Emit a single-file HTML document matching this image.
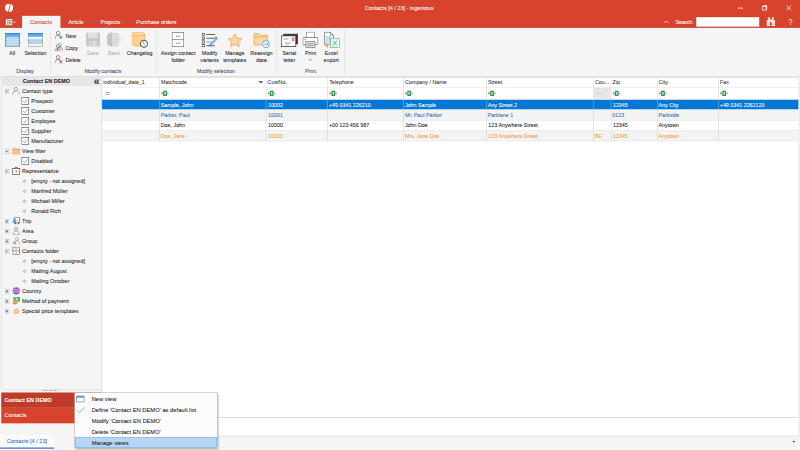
<!DOCTYPE html>
<html lang="en"><head><meta charset="utf-8"><title>Contacts [4 / 23] - ingenious</title>
<style>
html,body{margin:0;padding:0;width:800px;height:450px;overflow:hidden;background:#f5f5f5}
#app{-webkit-text-stroke:0.15px;position:absolute;left:0;top:0;width:1920px;height:1080px;transform:scale(0.4166667);transform-origin:0 0;font-family:"Liberation Sans",sans-serif;font-size:12.8px;color:#262626;background:#f5f5f5;overflow:hidden}
#app div,#app span,#app svg{position:absolute;white-space:nowrap}
.c{text-align:center;transform:translateX(-50%)}
.t{line-height:16px;height:16px}
.w{color:#fff}
.sep{width:1px;background:#d4d4d4;top:72px;height:104px}
.gl{color:#46506a}
.dis{color:#b0b0b0}
.hl{background:#dadada;height:1px}
.vl{background:#c6c6c6;width:1px}
.row{left:245px;width:1671px;height:25px}
.cell{line-height:24px;height:24px;top:0.5px}
.ti{line-height:16px;height:16px;left:53px;font-size:13.1px}
.ck{left:52px;width:15px;height:15px;border:1px solid #6a6a6a;background:#fff;box-sizing:border-box}
.cl{line-height:16px;height:16px;left:75px;font-size:13.1px}
.bu{left:57px;width:6px;height:6px;border:1.6px solid #4c4c4c;border-radius:50%;box-sizing:border-box;background:#fff}
.ex{left:12px;width:9.6px;height:9.6px;border:1px solid #9a9a9a;box-sizing:border-box;background:#fff}
.mi{line-height:16px;height:16px;left:220px;color:#1a1a1a;font-size:13.9px}
</style></head>
<body><div id="app">
<div style="left:0;top:0;width:1920px;height:66.5px;background:#d8432e"></div>
<svg style="left:11.8px;top:9px" width="19.6" height="19.6" viewBox="0 0 22 22"><circle cx="11" cy="11" r="11" fill="#fff"/><path d="M13.2 0 L15.6 0 L10.6 22 L8.2 22 Z" fill="#d8432e"/></svg>
<div class="t w c" style="left:958px;top:11px;font-size:13.2px">Contacts [4 / 23] - ingenious</div>
<svg style="left:1770px;top:12px" width="14" height="14" viewBox="0 0 14 14"><path d="M1 7.5H13" stroke="#fff" stroke-width="2"/></svg>
<svg style="left:1828px;top:12px" width="14" height="14" viewBox="0 0 14 14" fill="none" stroke="#fff" stroke-width="1.9"><rect x="1.5" y="3.5" width="9" height="9"/><path d="M3.5 3.5V1.5H12.5V10.5H10.5"/></svg>
<svg style="left:1886px;top:12px" width="14" height="14" viewBox="0 0 14 14" stroke="#fff" stroke-width="1.9"><path d="M1 1L13 13M13 1L1 13"/></svg>
<svg style="left:13px;top:45px" width="26" height="16" viewBox="0 0 26 16"><rect x="1" y="0.6" width="15.4" height="15.4" fill="#f2f2f2"/><path d="M5.6 1V15.6" stroke="#666" stroke-width="1.4"/><path d="M7.5 4.6H14.5M7.5 8.3H14.5M7.5 12H14.5" stroke="#555" stroke-width="1.7"/><path d="M19 7H25L22 10Z" fill="#fff"/></svg>
<div style="left:53px;top:38px;width:92px;height:34px;background:#f5f5f5"></div>
<div class="t c" style="left:98.5px;top:45px;color:#d8432e;font-size:13.6px">Contacts</div>
<div class="t w c" style="left:182.5px;top:45px;font-size:13.2px">Article</div>
<div class="t w c" style="left:265px;top:45px;font-size:13.2px">Projects</div>
<div class="t w c" style="left:375.5px;top:45px;font-size:13.2px">Purchase orders</div>
<svg style="left:1592px;top:47px" width="14" height="10" viewBox="0 0 14 10"><path d="M1.5 8.5L7 3L12.5 8.5" fill="none" stroke="#fff" stroke-width="1.8"/></svg>
<div class="t w" style="left:1621px;top:45.5px;font-size:12.8px">Search:</div>
<div style="left:1671px;top:41px;width:150.5px;height:23px;background:#fff;border:1px solid #c9c9c9;box-sizing:border-box"></div>
<svg style="left:1839px;top:41px" width="22" height="22" viewBox="0 0 22 22" fill="#fff"><rect x="4" y="0.5" width="4.6" height="8"/><rect x="13.4" y="0.5" width="4.6" height="8"/><rect x="8.6" y="6" width="4.8" height="5"/><path d="M2.5 7.5H9.2V21.5H0.8V10Z"/><path d="M19.5 7.5H12.8V21.5H21.2V10Z"/><path d="M0.8 14.4H9.2M12.8 14.4H21.2M0.8 18H9.2M12.8 18H21.2" stroke="#d8432e" stroke-width="1"/><path d="M6.3 0.5V8M15.7 0.5V8" stroke="#d8432e" stroke-width="0.9"/></svg>
<div class="t w c" style="left:1896.5px;top:44.5px;font-size:20px;-webkit-text-stroke:0;will-change:transform">?</div>
<div style="left:0;top:183px;width:1920px;height:2px;background:#dcdcdc"></div>
<div class="sep" style="left:121px"></div>
<div class="sep" style="left:375px"></div>
<div class="sep" style="left:663px"></div>
<div class="sep" style="left:826px"></div>
<div class="t c " style="left:29.5px;top:121px">All</div>
<div class="t c " style="left:85px;top:121px">Selection</div>
<div class="t c dis" style="left:223px;top:121px">Save</div>
<div class="t c dis" style="left:273.5px;top:121px">Back</div>
<div class="t c " style="left:335px;top:121px">Changelog</div>
<div class="t c " style="left:427.5px;top:121px">Assign contact</div>
<div class="t c " style="left:427.5px;top:136px">folder</div>
<div class="t c " style="left:503px;top:121px">Modify</div>
<div class="t c " style="left:503px;top:136px">variants</div>
<div class="t c " style="left:563.5px;top:121px">Manage</div>
<div class="t c " style="left:563.5px;top:136px">templates</div>
<div class="t c " style="left:627.5px;top:121px">Reassign</div>
<div class="t c " style="left:627.5px;top:136px">data</div>
<div class="t c " style="left:694.5px;top:121px">Serial</div>
<div class="t c " style="left:694.5px;top:136px">letter</div>
<div class="t c " style="left:745px;top:121px">Print</div>
<div class="t c " style="left:795px;top:121px">Excel</div>
<div class="t c " style="left:795px;top:136px">export</div>
<div class="t" style="left:157px;top:78px">New</div>
<div class="t" style="left:157px;top:107px">Copy</div>
<div class="t" style="left:157px;top:136px">Delete</div>
<div class="t c gl" style="left:60px;top:163px">Display</div>
<div class="t c gl" style="left:247px;top:163px">Modify contacts</div>
<div class="t c gl" style="left:518px;top:163px">Modify selection</div>
<div class="t c gl" style="left:745px;top:163px">Print</div>
<svg style="left:740px;top:140px" width="10" height="7" viewBox="0 0 10 7"><path d="M1 1L5 5L9 1" fill="none" stroke="#555" stroke-width="1.3"/></svg>
<svg style="left:12px;top:79px" width="36" height="33" viewBox="0 0 36 33"><rect x="0.8" y="0.8" width="34.4" height="31.4" fill="#a9d3f3" stroke="#5f5f5f" stroke-width="1.6"/><rect x="0" y="0" width="36" height="9" fill="#5aa9e6"/><rect x="0" y="0" width="36" height="2.6" fill="#3583d0"/><path d="M1.6 15H34.4M1.6 21H34.4M1.6 26.5H34.4M9.5 9V32M18 9V32M26.5 9V32" stroke="#e4f1fb" stroke-width="1.1"/></svg>
<svg style="left:67px;top:79px" width="36" height="33" viewBox="0 0 36 33"><rect x="0.8" y="0.8" width="34.4" height="31.4" fill="#a9d3f3" stroke="#8f8f8f" stroke-width="1.6"/><rect x="1.6" y="9" width="32.8" height="6" fill="#fff"/><rect x="1.6" y="26.5" width="32.8" height="5" fill="#fff"/><rect x="0" y="0" width="36" height="9" fill="#5aa9e6"/><rect x="0" y="0" width="36" height="2.6" fill="#3583d0"/><path d="M1.6 15H34.4M1.6 21H34.4M1.6 26.5H34.4M9.5 9V32M18 9V32M26.5 9V32" stroke="#d0d0d0" stroke-width="1.1"/></svg>
<svg style="left:131px;top:74px" width="21" height="21" viewBox="0 0 21 21"><circle cx="8.5" cy="5.5" r="4.2" fill="#fff" stroke="#555" stroke-width="1.5"/><path d="M1 19C1 13.5 4 10.8 8.5 10.8C12 10.8 14.5 12.5 15.5 15" fill="none" stroke="#555" stroke-width="1.5"/><path d="M15 11.5V20M10.8 15.8H19.3" stroke="#35b05a" stroke-width="2.2"/></svg>
<svg style="left:131px;top:103px" width="21" height="21" viewBox="0 0 21 21"><circle cx="12" cy="5" r="3.8" fill="#fff" stroke="#555" stroke-width="1.4"/><path d="M6 19C6 13.5 8.5 10 12 10C16 10 19 13 19.5 18" fill="none" stroke="#555" stroke-width="1.4"/><circle cx="7.5" cy="7.5" r="3.5" fill="#fff" stroke="#555" stroke-width="1.4"/><path d="M1 20C1 15 3.5 12.3 7.5 12.3C11.5 12.3 13.5 15 14 20" fill="none" stroke="#555" stroke-width="1.4"/><rect x="6.2" y="14.5" width="2.8" height="5.5" fill="#e23c3c"/><path d="M13 10L15 13" stroke="#e23c3c" stroke-width="1.2"/></svg>
<svg style="left:131px;top:132px" width="21" height="21" viewBox="0 0 21 21"><circle cx="8.5" cy="5.5" r="4.2" fill="#fff" stroke="#555" stroke-width="1.5"/><path d="M1 19C1 13.5 4 10.8 8.5 10.8C12 10.8 14.5 12.5 15.5 15" fill="none" stroke="#555" stroke-width="1.5"/><path d="M11 12.5L19 20.5M19 12.5L11 20.5" stroke="#e23c3c" stroke-width="2.1"/></svg>
<svg style="left:206px;top:78px" width="34" height="34" viewBox="0 0 34 34"><path d="M0 0H34V34H4L0 30Z" fill="#c9c9c9"/><rect x="6" y="0" width="22" height="13" fill="#e2e2e2"/><rect x="8" y="21" width="18" height="13" fill="#dedede"/><rect x="11" y="24" width="5" height="7" fill="#c4c4c4"/></svg>
<svg style="left:256px;top:77px" width="36" height="36" viewBox="0 0 36 36"><rect x="12" y="3" width="16" height="30" rx="1.5" fill="#dedede" stroke="#cdcdcd" stroke-width="1.2"/><path d="M1 6L13 0V36L1 30Z" fill="#c4c4c4"/><path d="M17 18H34M29 13L34.5 18L29 23" fill="none" stroke="#d0d0d0" stroke-width="1.6"/></svg>
<svg style="left:316px;top:76px" width="40" height="40" viewBox="0 0 40 40"><path d="M1 5.5V29.5C1 32.8 7.5 35 16 35C24.5 35 31 32.8 31 29.5V5.5Z" fill="#fbd38d" stroke="#f5a34c" stroke-width="1.5"/><ellipse cx="16" cy="5.5" rx="15" ry="4.5" fill="#fcdca4" stroke="#f5a34c" stroke-width="1.5"/><circle cx="29.5" cy="29" r="8.6" fill="#fff" stroke="#2e2e2e" stroke-width="2"/><path d="M29 23.5V29.5L33 32.5" fill="none" stroke="#3b8fe0" stroke-width="1.8"/></svg>
<svg style="left:412px;top:77px" width="30" height="36" viewBox="0 0 30 36"><rect x="1" y="1" width="28" height="34" fill="#fff" stroke="#737373" stroke-width="1.7"/><path d="M1 18H29" stroke="#737373" stroke-width="1.7"/><path d="M11 7V10.5H19V7M11 24V27.5H19V24" fill="none" stroke="#777" stroke-width="1.3"/></svg>
<svg style="left:484px;top:78px" width="40" height="36" viewBox="0 0 40 36"><rect x="1" y="2" width="5.5" height="5.5" fill="#fff" stroke="#333" stroke-width="1.6"/><path d="M11 4.8H32" stroke="#333" stroke-width="1.8"/><rect x="1" y="11" width="5.5" height="5.5" fill="#fff" stroke="#333" stroke-width="1.6"/><path d="M11 13.8H32" stroke="#333" stroke-width="1.8"/><rect x="1" y="20" width="5.5" height="5.5" fill="#fff" stroke="#333" stroke-width="1.6"/><path d="M11 22.8H26" stroke="#888" stroke-width="1.8"/><rect x="1" y="29" width="5.5" height="5.5" fill="#fff" stroke="#333" stroke-width="1.6"/><path d="M11 31.8H32" stroke="#333" stroke-width="1.8"/><path d="M17 33.5L19.5 27.5L33.5 13.5L37 17L23 31Z" fill="#6db3ea"/><path d="M17 33.5L19.5 27.5L23 31Z" fill="#3a7fc8"/><path d="M31.5 11.5L34 9L39 14L36.5 16.5Z" fill="#4a9be4"/></svg>
<svg style="left:546px;top:80px" width="36" height="33" viewBox="0 0 36 33"><path d="M18 1L22.8 11.8L34.8 13L25.8 21L28.4 32L18 26.2L7.6 32L10.2 21L1.2 13L13.2 11.8Z" fill="#fcd6a3" stroke="#f1923a" stroke-width="1.5" stroke-linejoin="round"/></svg>
<svg style="left:608px;top:78px" width="40" height="40" viewBox="0 0 40 40"><path d="M1.5 3H13L16 6.5H33.5V30H1.5Z" fill="#fbd8a8" stroke="#f2994a" stroke-width="1.8"/><path d="M1.5 10.5H33.5" stroke="#f2994a" stroke-width="1.4"/><circle cx="30.5" cy="28" r="8.4" fill="#fff" stroke="#3b93e3" stroke-width="1.8"/><path d="M25.5 28H35M31.5 24.2L35.3 28L31.5 31.8" fill="none" stroke="#3b93e3" stroke-width="1.7"/></svg>
<svg style="left:674px;top:80px" width="42" height="33" viewBox="0 0 42 33"><rect x="6" y="1" width="35" height="25" fill="#3a3a3a"/><rect x="1" y="6" width="35" height="26" fill="#fff" stroke="#2b2b2b" stroke-width="1.8"/><rect x="26.5" y="10" width="6" height="8" fill="#e24a4a"/><rect x="28.5" y="12" width="2" height="4" fill="#fff"/><path d="M6 12H20M6 15H17M10 21.5H24M10 24.5H24M10 27.5H20" stroke="#9a9a9a" stroke-width="1.2"/></svg>
<svg style="left:726px;top:76px" width="38" height="39" viewBox="0 0 38 39"><rect x="9" y="1" width="20" height="14" fill="#fff" stroke="#777" stroke-width="1.5"/><rect x="1" y="14" width="36" height="17" rx="2" fill="#fff" stroke="#666" stroke-width="1.7"/><rect x="8" y="24" width="22" height="14" fill="#e4e4e4" stroke="#666" stroke-width="1.5"/><path d="M11 29H27M11 33H27" stroke="#8a8a8a" stroke-width="1.8"/><circle cx="6.5" cy="19" r="1.6" fill="#2f7fe0"/></svg>
<svg style="left:776px;top:76px" width="40" height="40" viewBox="0 0 40 40"><path d="M3 1.5H17L24 8.5V30H3Z" fill="#fff" stroke="#555" stroke-width="1.5"/><path d="M17 1.5V8.5H24" fill="none" stroke="#555" stroke-width="1.3"/><rect x="6" y="10" width="5" height="17" fill="#bcdcf5"/><rect x="12.5" y="10" width="5" height="17" fill="#9fcbf0"/><rect x="17" y="17" width="21.5" height="21" fill="#eef9f1" stroke="#62bf82" stroke-width="1.7"/><path d="M22.5 22L33 33.5M33 22L22.5 33.5" stroke="#45ad68" stroke-width="1.9"/><path d="M3 26C3 33 6 35 11 35M8 31.5L11.5 35L8 38.5" fill="none" stroke="#e55a5a" stroke-width="1.7"/></svg>
<div style="left:244px;top:184.5px;width:1673.5px;height:862px;background:#fff;border:1.5px solid #c4c4c4;box-sizing:border-box"></div>
<div class="t" style="left:248px;top:190px;color:#383840">individual_date_1</div>
<div class="t" style="left:386.3px;top:190px;color:#383840">Matchcode</div>
<div class="t" style="left:642.3px;top:190px;color:#383840">CustNo.</div>
<div class="t" style="left:790px;top:190px;color:#383840">Telephone</div>
<div class="t" style="left:972.3px;top:190px;color:#383840">Company / Name</div>
<div class="t" style="left:1171px;top:190px;color:#383840">Street</div>
<div class="t" style="left:1428px;top:190px;color:#383840">Cou...</div>
<div class="t" style="left:1470px;top:190px;color:#383840">Zip</div>
<div class="t" style="left:1581px;top:190px;color:#383840">City</div>
<div class="t" style="left:1728px;top:190px;color:#383840">Fax</div>
<svg style="left:620px;top:194px" width="12" height="8" viewBox="0 0 12 8"><path d="M0 0.5H12L6 7Z" fill="#707070"/></svg>
<div class="row" style="top:239.1px;background:#0078d7;color:#fff;height:24.2px">
<div class="cell" style="left:140.8px">Sample, John</div>
<div class="cell" style="left:398.29999999999995px">10002</div>
<div class="cell" style="left:544.5px">+49 0341 226210</div>
<div class="cell" style="left:726.8px">John Sample</div>
<div class="cell" style="left:925.5px">Any Street 2</div>
<div class="cell" style="left:1226px">12345</div>
<div class="cell" style="left:1335.5px">Any City</div>
<div class="cell" style="left:1482.5px">+49 0341 2262120</div>
</div>
<div class="row" style="top:263.3px;background:#f3f3f3;color:#2e75b6">
<div class="cell" style="left:140.8px">Parker, Paul</div>
<div class="cell" style="left:398.29999999999995px">10001</div>
<div class="cell" style="left:726.8px">Mr. Paul Parker</div>
<div class="cell" style="left:925.5px">Parklane 1</div>
<div class="cell" style="left:1224.5px">0123</div>
<div class="cell" style="left:1335.5px">Parkside</div>
</div>
<div class="row" style="top:288.3px;background:#fff;color:#222">
<div class="cell" style="left:140.8px">Doe, John</div>
<div class="cell" style="left:398.29999999999995px">10000</div>
<div class="cell" style="left:544.5px">+00 123 456 987</div>
<div class="cell" style="left:726.8px">John Doe</div>
<div class="cell" style="left:927px">123 Anywhere Street</div>
<div class="cell" style="left:1226px">12345</div>
<div class="cell" style="left:1335.5px">Anytown</div>
</div>
<div class="row" style="top:313.3px;background:#f3f3f3;color:#f0a040">
<div class="cell" style="left:140.8px">Doe, Jane</div>
<div class="cell" style="left:398.29999999999995px">10000</div>
<div class="cell" style="left:726.8px">Mrs. Jane Doe</div>
<div class="cell" style="left:927px">123 Anywhere Street</div>
<div class="cell" style="left:1182.5px">BE</div>
<div class="cell" style="left:1226px">12345</div>
<div class="cell" style="left:1335.5px">Anytown</div>
</div>
<div class="hl" style="left:245px;top:210px;width:1671px"></div>
<div class="hl" style="left:245px;top:263.3px;width:1671px"></div>
<div class="hl" style="left:245px;top:288.3px;width:1671px"></div>
<div class="hl" style="left:245px;top:313.3px;width:1671px"></div>
<div class="hl" style="left:245px;top:338.3px;width:1671px"></div>
<div class="hl" style="left:245px;top:1001px;width:1671px;height:1.6px;background:#d6d6d6"></div>
<div class="vl" style="left:382.3px;top:185px;height:154px"></div>
<div class="vl" style="left:638.3px;top:185px;height:154px"></div>
<div class="vl" style="left:786px;top:185px;height:154px"></div>
<div class="vl" style="left:968.3px;top:185px;height:154px"></div>
<div class="vl" style="left:1167px;top:185px;height:154px"></div>
<div class="vl" style="left:1424px;top:185px;height:154px"></div>
<div class="vl" style="left:1466px;top:185px;height:154px"></div>
<div class="vl" style="left:1577px;top:185px;height:154px"></div>
<div class="vl" style="left:1724px;top:185px;height:154px"></div>
<div style="left:245px;top:236.6px;width:1671px;height:2.6px;background:#e9e2dd"></div>
<div style="left:1425px;top:211px;width:41px;height:25.5px;background:#e6e6e6"></div>
<div class="t" style="left:1432px;top:213px;color:#aaa">...</div>
<div class="t" style="left:252px;top:217px;font-size:19px;color:#666;transform:scaleX(1.1);transform-origin:0 0">=</div>
<svg style="left:386.3px;top:216px" width="22" height="16" viewBox="0 0 22 16"><path d="M0.5 10.5L2.6 5.5L4.7 10.5M1.3 8.8H3.9" fill="none" stroke="#444" stroke-width="1.1"/><rect x="5.5" y="1.6" width="9" height="13" rx="1" fill="#2f9a48"/><rect x="8.5" y="5" width="3" height="6" fill="#eaf7ec"/><path d="M18.6 6.8C17.2 5.8 15.6 6.6 15.6 8.2C15.6 9.8 17.2 10.6 18.6 9.6" fill="none" stroke="#444" stroke-width="1.1"/></svg>
<svg style="left:642.3px;top:216px" width="22" height="16" viewBox="0 0 22 16"><path d="M0.5 10.5L2.6 5.5L4.7 10.5M1.3 8.8H3.9" fill="none" stroke="#444" stroke-width="1.1"/><rect x="5.5" y="1.6" width="9" height="13" rx="1" fill="#2f9a48"/><rect x="8.5" y="5" width="3" height="6" fill="#eaf7ec"/><path d="M18.6 6.8C17.2 5.8 15.6 6.6 15.6 8.2C15.6 9.8 17.2 10.6 18.6 9.6" fill="none" stroke="#444" stroke-width="1.1"/></svg>
<svg style="left:790px;top:216px" width="22" height="16" viewBox="0 0 22 16"><path d="M0.5 10.5L2.6 5.5L4.7 10.5M1.3 8.8H3.9" fill="none" stroke="#444" stroke-width="1.1"/><rect x="5.5" y="1.6" width="9" height="13" rx="1" fill="#2f9a48"/><rect x="8.5" y="5" width="3" height="6" fill="#eaf7ec"/><path d="M18.6 6.8C17.2 5.8 15.6 6.6 15.6 8.2C15.6 9.8 17.2 10.6 18.6 9.6" fill="none" stroke="#444" stroke-width="1.1"/></svg>
<svg style="left:972.3px;top:216px" width="22" height="16" viewBox="0 0 22 16"><path d="M0.5 10.5L2.6 5.5L4.7 10.5M1.3 8.8H3.9" fill="none" stroke="#444" stroke-width="1.1"/><rect x="5.5" y="1.6" width="9" height="13" rx="1" fill="#2f9a48"/><rect x="8.5" y="5" width="3" height="6" fill="#eaf7ec"/><path d="M18.6 6.8C17.2 5.8 15.6 6.6 15.6 8.2C15.6 9.8 17.2 10.6 18.6 9.6" fill="none" stroke="#444" stroke-width="1.1"/></svg>
<svg style="left:1171px;top:216px" width="22" height="16" viewBox="0 0 22 16"><path d="M0.5 10.5L2.6 5.5L4.7 10.5M1.3 8.8H3.9" fill="none" stroke="#444" stroke-width="1.1"/><rect x="5.5" y="1.6" width="9" height="13" rx="1" fill="#2f9a48"/><rect x="8.5" y="5" width="3" height="6" fill="#eaf7ec"/><path d="M18.6 6.8C17.2 5.8 15.6 6.6 15.6 8.2C15.6 9.8 17.2 10.6 18.6 9.6" fill="none" stroke="#444" stroke-width="1.1"/></svg>
<svg style="left:1470px;top:216px" width="22" height="16" viewBox="0 0 22 16"><path d="M0.5 10.5L2.6 5.5L4.7 10.5M1.3 8.8H3.9" fill="none" stroke="#444" stroke-width="1.1"/><rect x="5.5" y="1.6" width="9" height="13" rx="1" fill="#2f9a48"/><rect x="8.5" y="5" width="3" height="6" fill="#eaf7ec"/><path d="M18.6 6.8C17.2 5.8 15.6 6.6 15.6 8.2C15.6 9.8 17.2 10.6 18.6 9.6" fill="none" stroke="#444" stroke-width="1.1"/></svg>
<svg style="left:1581px;top:216px" width="22" height="16" viewBox="0 0 22 16"><path d="M0.5 10.5L2.6 5.5L4.7 10.5M1.3 8.8H3.9" fill="none" stroke="#444" stroke-width="1.1"/><rect x="5.5" y="1.6" width="9" height="13" rx="1" fill="#2f9a48"/><rect x="8.5" y="5" width="3" height="6" fill="#eaf7ec"/><path d="M18.6 6.8C17.2 5.8 15.6 6.6 15.6 8.2C15.6 9.8 17.2 10.6 18.6 9.6" fill="none" stroke="#444" stroke-width="1.1"/></svg>
<svg style="left:1728px;top:216px" width="22" height="16" viewBox="0 0 22 16"><path d="M0.5 10.5L2.6 5.5L4.7 10.5M1.3 8.8H3.9" fill="none" stroke="#444" stroke-width="1.1"/><rect x="5.5" y="1.6" width="9" height="13" rx="1" fill="#2f9a48"/><rect x="8.5" y="5" width="3" height="6" fill="#eaf7ec"/><path d="M18.6 6.8C17.2 5.8 15.6 6.6 15.6 8.2C15.6 9.8 17.2 10.6 18.6 9.6" fill="none" stroke="#444" stroke-width="1.1"/></svg>
<div style="left:3px;top:184px;width:241px;height:751px;background:#f5f5f5;border:1px solid #d0d0d0;box-sizing:border-box"></div>
<div style="left:4px;top:185px;width:239px;height:21px;background:#e6e6e6"></div>
<div class="t c" style="left:111.5px;top:188px;font-weight:bold;color:#222;font-size:13.1px">Contact EN DEMO</div>
<div class="t" style="left:225px;top:186px;font-weight:bold;color:#333;font-size:25px">«</div>
<div class="ex" style="top:214.1px"></div>
<div style="left:14.3px;top:218.4px;width:5px;height:1.4px;background:#3058a4"></div>
<svg style="left:28.5px;top:208.1px" width="20" height="20" viewBox="0 0 20 20"><circle cx="9" cy="5.5" r="4" fill="#fff" stroke="#666" stroke-width="1.4"/><path d="M1.5 18.5C1.5 13 5 10.5 9 10.5" fill="none" stroke="#666" stroke-width="1.4"/><path d="M11 10.8C15 11 18 13.5 18 17.5L14 18.5" fill="none" stroke="#5b9fe0" stroke-width="1.4"/></svg>
<div class="ti" style="top:210.1px">Contact type</div>
<svg style="left:50.5px;top:233.1px" width="19" height="19" viewBox="0 0 19 19"><rect x="1" y="1" width="17" height="17" fill="#fff" stroke="#5a5a5a" stroke-width="1.6"/><path d="M4 9.5L7.8 13.5L15 5" fill="none" stroke="#4a9be0" stroke-width="1.7"/></svg>
<div class="cl" style="top:234.1px">Prospect</div>
<svg style="left:50.5px;top:257.1px" width="19" height="19" viewBox="0 0 19 19"><rect x="1" y="1" width="17" height="17" fill="#fff" stroke="#5a5a5a" stroke-width="1.6"/><path d="M4 9.5L7.8 13.5L15 5" fill="none" stroke="#4a9be0" stroke-width="1.7"/></svg>
<div class="cl" style="top:258.1px">Customer</div>
<svg style="left:50.5px;top:281.1px" width="19" height="19" viewBox="0 0 19 19"><rect x="1" y="1" width="17" height="17" fill="#fff" stroke="#5a5a5a" stroke-width="1.6"/><path d="M4 9.5L7.8 13.5L15 5" fill="none" stroke="#4a9be0" stroke-width="1.7"/></svg>
<div class="cl" style="top:282.1px">Employee</div>
<svg style="left:50.5px;top:305.1px" width="19" height="19" viewBox="0 0 19 19"><rect x="1" y="1" width="17" height="17" fill="#fff" stroke="#5a5a5a" stroke-width="1.6"/><path d="M4 9.5L7.8 13.5L15 5" fill="none" stroke="#4a9be0" stroke-width="1.7"/></svg>
<div class="cl" style="top:306.1px">Supplier</div>
<svg style="left:50.5px;top:329.1px" width="19" height="19" viewBox="0 0 19 19"><rect x="1" y="1" width="17" height="17" fill="#fff" stroke="#5a5a5a" stroke-width="1.6"/><path d="M4 9.5L7.8 13.5L15 5" fill="none" stroke="#4a9be0" stroke-width="1.7"/></svg>
<div class="cl" style="top:330.1px">Manufacturer</div>
<div class="ex" style="top:358.1px"></div>
<div style="left:14.3px;top:362.4px;width:5px;height:1.4px;background:#3058a4"></div>
<svg style="left:28.5px;top:352.1px" width="20" height="20" viewBox="0 0 20 20"><path d="M1.5 3.5H8L10 5.5H18.5V17.5H1.5Z" fill="#f9c796" stroke="#f0944a" stroke-width="1.4"/><path d="M1.5 7.5H18.5" stroke="#f0944a" stroke-width="1.2"/></svg>
<div class="ti" style="top:354.1px">View filter</div>
<svg style="left:50.5px;top:377.1px" width="19" height="19" viewBox="0 0 19 19"><rect x="1" y="1" width="17" height="17" fill="#fff" stroke="#5a5a5a" stroke-width="1.6"/><path d="M4 9.5L7.8 13.5L15 5" fill="none" stroke="#4a9be0" stroke-width="1.7"/></svg>
<div class="cl" style="top:378.1px">Disabled</div>
<div class="ex" style="top:406.1px"></div>
<div style="left:14.3px;top:410.4px;width:5px;height:1.4px;background:#3058a4"></div>
<svg style="left:28.5px;top:400.1px" width="20" height="20" viewBox="0 0 20 20"><rect x="1.5" y="4.5" width="17" height="14" fill="#fff" stroke="#333" stroke-width="1.5"/><path d="M7 4.5V2H13V4.5" fill="none" stroke="#333" stroke-width="1.4"/><rect x="8" y="9" width="4" height="5" fill="#f08030"/></svg>
<div class="ti" style="top:402.1px">Representative</div>
<div class="bu" style="left:55.5px;top:432.1px"></div>
<div class="cl" style="top:426.1px">[empty - not assigned]</div>
<div class="bu" style="left:55.5px;top:456.1px"></div>
<div class="cl" style="top:450.1px">Manfred Müller</div>
<div class="bu" style="left:55.5px;top:480.1px"></div>
<div class="cl" style="top:474.1px">Michael Miller</div>
<div class="bu" style="left:55.5px;top:504.1px"></div>
<div class="cl" style="top:498.1px">Ronald Rich</div>
<div class="ex" style="top:526.1px"></div>
<div style="left:14.3px;top:530.4px;width:5px;height:1.4px;background:#3058a4"></div>
<div style="left:16.25px;top:528.5px;width:1.3px;height:5px;background:#3058a4"></div>
<svg style="left:28.5px;top:520.1px" width="20" height="20" viewBox="0 0 20 20"><rect x="6" y="1.5" width="12" height="13" rx="1.5" fill="#fff" stroke="#444" stroke-width="1.4"/><path d="M1 16L4 4L9 5V15Z" fill="#5b9fe0"/><circle cx="8" cy="16.5" r="1.8" fill="#444"/><circle cx="15.5" cy="16.5" r="1.8" fill="#444"/><path d="M6 10H18" stroke="#5b9fe0" stroke-width="1.2"/></svg>
<div class="ti" style="top:522.1px">Trip</div>
<div class="ex" style="top:550.1px"></div>
<div style="left:14.3px;top:554.4px;width:5px;height:1.4px;background:#3058a4"></div>
<div style="left:16.25px;top:552.5px;width:1.3px;height:5px;background:#3058a4"></div>
<svg style="left:28.5px;top:544.1px" width="20" height="20" viewBox="0 0 20 20"><circle cx="10" cy="5.5" r="4" fill="#fff" stroke="#777" stroke-width="1.3"/><circle cx="10" cy="5.5" r="1.6" fill="none" stroke="#999" stroke-width="1"/><path d="M2 18.5L6.5 10.5H13.5L18 18.5Z" fill="#fff" stroke="#777" stroke-width="1.3"/></svg>
<div class="ti" style="top:546.1px">Area</div>
<div class="ex" style="top:574.1px"></div>
<div style="left:14.3px;top:578.4px;width:5px;height:1.4px;background:#3058a4"></div>
<div style="left:16.25px;top:576.5px;width:1.3px;height:5px;background:#3058a4"></div>
<svg style="left:28.5px;top:568.1px" width="20" height="20" viewBox="0 0 20 20"><circle cx="12" cy="5" r="3.6" fill="#fff" stroke="#777" stroke-width="1.3"/><path d="M5 18.5C5 13 8 10 12 10C16 10 18.5 13 18.5 18.5" fill="none" stroke="#777" stroke-width="1.3"/><path d="M2 18.5C2 14 4 11.5 7 11" fill="none" stroke="#777" stroke-width="1.3"/><path d="M7 18L9 12.5L10.5 18Z" fill="#e04040"/></svg>
<div class="ti" style="top:570.1px">Group</div>
<div class="ex" style="top:598.1px"></div>
<div style="left:14.3px;top:602.4px;width:5px;height:1.4px;background:#3058a4"></div>
<svg style="left:28.5px;top:592.1px" width="20" height="20" viewBox="0 0 20 20"><rect x="2" y="1" width="16" height="18" fill="#fff" stroke="#3c3c3c" stroke-width="1.25"/><path d="M2 10H18" stroke="#3c3c3c" stroke-width="1.25"/><path d="M8 4.5V6H12V4.5M8 13.5V15H12V13.5" fill="none" stroke="#555" stroke-width="1.1"/></svg>
<div class="ti" style="top:594.1px">Contacts folder</div>
<div class="bu" style="left:55.5px;top:624.1px"></div>
<div class="cl" style="top:618.1px">[empty - not assigned]</div>
<div class="bu" style="left:55.5px;top:648.1px"></div>
<div class="cl" style="top:642.1px">Mailing August</div>
<div class="bu" style="left:55.5px;top:672.1px"></div>
<div class="cl" style="top:666.1px">Mailing October</div>
<div class="ex" style="top:694.1px"></div>
<div style="left:14.3px;top:698.4px;width:5px;height:1.4px;background:#3058a4"></div>
<div style="left:16.25px;top:696.5px;width:1.3px;height:5px;background:#3058a4"></div>
<svg style="left:28.5px;top:688.1px" width="20" height="20" viewBox="0 0 20 20"><circle cx="10" cy="10" r="8.8" fill="#8e44ad"/><path d="M1.5 7.5H18.5M1.5 12.5H18.5" stroke="#fff" stroke-width="1.5"/><ellipse cx="10" cy="10" rx="4" ry="8.8" fill="none" stroke="#d9b8ea" stroke-width="1"/></svg>
<div class="ti" style="top:690.1px">Country</div>
<div class="ex" style="top:718.1px"></div>
<div style="left:14.3px;top:722.4px;width:5px;height:1.4px;background:#3058a4"></div>
<div style="left:16.25px;top:720.5px;width:1.3px;height:5px;background:#3058a4"></div>
<svg style="left:28.5px;top:712.1px" width="20" height="20" viewBox="0 0 20 20"><rect x="3" y="1" width="16" height="11" rx="1" fill="#4cb872"/><circle cx="11" cy="6.5" r="2.6" fill="#d6f0de"/><ellipse cx="7" cy="13" rx="6" ry="2.6" fill="#f7a85a"/><ellipse cx="7" cy="16" rx="6" ry="2.6" fill="#f28f3b"/></svg>
<div class="ti" style="top:714.1px">Method of payment</div>
<div class="ex" style="top:742.1px"></div>
<div style="left:14.3px;top:746.4px;width:5px;height:1.4px;background:#3058a4"></div>
<div style="left:16.25px;top:744.5px;width:1.3px;height:5px;background:#3058a4"></div>
<svg style="left:28.5px;top:736.1px" width="20" height="20" viewBox="0 0 20 20"><path transform="translate(1.8,2.6) scale(0.82)" d="M10 1.5L12.6 7.4L19 8L14.2 12.3L15.6 18.6L10 15.3L4.4 18.6L5.8 12.3L1 8L7.4 7.4Z" fill="#fcd29c" stroke="#f0943a" stroke-width="1.5"/></svg>
<div class="ti" style="top:738.1px">Special price templates</div>
<div style="left:101px;top:936px;width:42px;height:2px;background-image:repeating-linear-gradient(90deg,#999 0 2px,transparent 2px 4px)"></div>
<div style="left:3px;top:942px;width:241px;height:36px;background:#bf3a27"></div>
<div style="left:3px;top:978px;width:241px;height:38px;background:#d8432e"></div>
<div style="left:3px;top:977.5px;width:241px;height:1px;background:#a83020"></div>
<div class="t w" style="left:11px;top:952px;font-weight:bold;font-size:13.1px">Contact EN DEMO</div>
<div class="t w" style="left:11px;top:988px;font-size:13.3px">Contacts</div>
<div style="left:0;top:1044px;width:130px;height:36px;background:#fafafa"></div>
<div style="left:0;top:1074px;width:130px;height:3px;background:#2b7bd0"></div>
<div class="t" style="left:16px;top:1052px;font-size:13.3px;color:#2878c8">Contacts [4 / 23]</div>
<svg style="left:1901px;top:1058px" width="8" height="5" viewBox="0 0 8 5"><path d="M0 0H8L4 4.5Z" fill="#444"/></svg>
<div style="left:179px;top:942px;width:343px;height:134px;background:#fcfcfc;border:1.3px solid #9c9c9c;box-sizing:border-box;box-shadow:3px 3px 5px rgba(0,0,0,0.35)"></div>
<div style="left:181px;top:1050px;width:339px;height:24px;background:#b8d6f2;border:1.5px solid #2f8ce0;box-sizing:border-box"></div>
<div class="mi" style="top:949px">New view</div>
<div class="mi" style="top:976px">Define 'Contact EN DEMO' as default list</div>
<div class="mi" style="top:1002px">Modify 'Contact EN DEMO'</div>
<div class="mi" style="top:1028px">Delete 'Contact EN DEMO'</div>
<div class="mi" style="top:1055px">Manage views</div>
<svg style="left:183px;top:949px" width="20" height="17" viewBox="0 0 20 17"><rect x="1" y="1" width="18" height="15" fill="#fff" stroke="#444" stroke-width="1.6"/><rect x="1.8" y="1.8" width="16.4" height="3.6" fill="#4a90d9"/></svg>
<svg style="left:184px;top:976px" width="20" height="16" viewBox="0 0 20 16"><path d="M1.5 8.5L7 14L18.5 1.5" fill="none" stroke="#4fc07c" stroke-width="2"/></svg>
<div style="left:214px;top:944px;width:1px;height:105px;background:#eeeeee"></div>
</div></body></html>
